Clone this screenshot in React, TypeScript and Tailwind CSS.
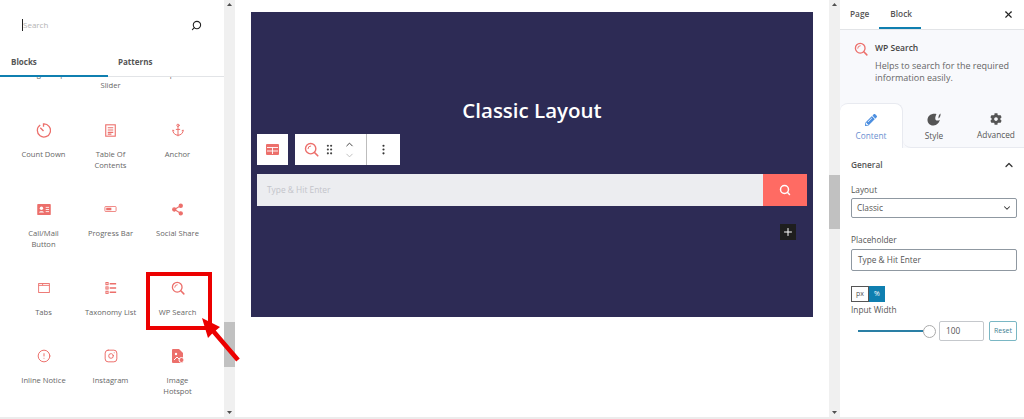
import { Anchor, ChevronDown, ChevronUp, CircleAlert, EllipsisVertical, GripVertical, Instagram, Plus, Search, Share2, X } from "lucide-react";
import type { ReactNode } from "react";
import { FaCog, FaPencilAlt } from "react-icons/fa";

const coral = "#ec6f6b";

const WpSearchIcon = ({ size = 18, color = coral }: { size?: number; color?: string }) => (
  <svg width={size} height={size} viewBox="0 0 18 18" fill="none" stroke={color} strokeWidth="1.7" strokeLinecap="round">
    <circle cx="8" cy="8" r="6.2" />
    <path d="M4.8 8a3.2 3.2 0 0 1 3.2-3.2" strokeWidth="1.2" />
    <path d="M12.6 12.6 16.5 16.5" strokeWidth="2" />
  </svg>
);

const CountDownIcon = () => (
  <svg width="15" height="15" viewBox="0 0 16 16" fill="none" stroke={coral} strokeWidth="1.4">
    <path d="M4.5 2.2A7 7 0 1 0 8 1v3" />
    <path d="M4.6 5 8 8.6" />
  </svg>
);

const TocIcon = () => (
  <svg width="11" height="13" viewBox="0 0 12 14" fill="none" stroke={coral} strokeWidth="1.2">
    <rect x="0.8" y="0.8" width="10.4" height="12.4" />
    <path d="M3 4h6M3 6.5h6M3 9h6M3 11h4" />
  </svg>
);

const ContactIcon = () => (
  <svg width="14" height="11" viewBox="0 0 16 13">
    <rect width="16" height="13" rx="1" fill={coral} />
    <circle cx="5" cy="5" r="2" fill="white" />
    <path d="M2 10c.5-2 5.500-2 6 0z" fill="white" />
    <path d="M10 4h4M10 6.500h4M10 9h4" stroke="white" />
  </svg>
);

const ProgressIcon = () => (
  <svg width="13" height="6" viewBox="0 0 14 7" fill="none" stroke={coral}>
    <rect x="0.5" y="0.5" width="13" height="6" rx="1" />
    <rect x="2" y="2" width="6" height="3" fill={coral} stroke="none" />
  </svg>
);

const TabsIcon = () => (
  <svg width="12" height="10" viewBox="0 0 13 11" fill="none" stroke={coral} strokeWidth="1">
    <rect x="0.6" y="0.6" width="11.8" height="9.800" />
    <path d="M0.600 2.600h11.800M5 .6v2" />
  </svg>
);

const TaxonomyIcon = () => (
  <svg width="12" height="12" viewBox="0 0 13 14" fill="none" stroke={coral} strokeWidth="1.2">
    <rect x="0.600" y="0.600" width="2.500" height="2.500" />
    <rect x="0.600" y="5.700" width="2.500" height="2.500" />
    <rect x="0.600" y="10.800" width="2.500" height="2.500" />
    <path d="M5 2h7.500M5 7h7.500M5 12h7.500" strokeWidth="1.800" />
  </svg>
);

const HotspotIcon = () => (
  <svg width="12" height="14" viewBox="0 0 12 14">
    <path d="M1 0h6l4 4v9a1 1 0 0 1-1 1H1a1 1 0 0 1-1-1V1a1 1 0 0 1 1-1z" fill={coral} />
    <circle cx="4" cy="5" r="1.200" fill="white" />
    <path d="m2 11 3-3 2 2" stroke="white" fill="none" />
    <circle cx="9.500" cy="11" r="2.500" fill={coral} stroke="white" />
  </svg>
);

const StyleIcon = () => (
  <svg width="14" height="13" viewBox="0 0 14 13" fill="#555">
    <path d="M13.500 0.500C13.700 3 13 4.500 11.500 5.500 11.200 3.500 12 1.500 13.500.5zM9.500 1C5.500-.2 1 2 .5 6.500.2 10 3 12.800 6.500 12.500c3.500-.3 6-3 6.200-5.800-1.200 1-3 1.300-3.900.3C7.700 5.700 8.500 3 9.500 1z" />
  </svg>
);

const TableIcon = () => (
  <svg width="13" height="11" viewBox="0 0 13 11">
    <rect width="13" height="11" rx="1" fill={coral} />
    <path d="M1 3.500h11M1 7h11M6.500 3.500V10" stroke="white" strokeWidth="0.9" />
  </svg>
);

const blocks: { label: ReactNode; icon: ReactNode }[] = [
  { label: "Count Down", icon: <CountDownIcon /> },
  { label: <>Table Of<br />Contents</>, icon: <TocIcon /> },
  { label: "Anchor", icon: <Anchor size={14} color={coral} strokeWidth={1.7} /> },
  { label: <>Call/Mail<br />Button</>, icon: <ContactIcon /> },
  { label: "Progress Bar", icon: <ProgressIcon /> },
  { label: "Social Share", icon: <Share2 size={13} color={coral} fill={coral} /> },
  { label: "Tabs", icon: <TabsIcon /> },
  { label: "Taxonomy List", icon: <TaxonomyIcon /> },
  { label: "WP Search", icon: <WpSearchIcon size={14} /> },
  { label: "Inline Notice", icon: <CircleAlert size={14} color={coral} strokeWidth={1.7} /> },
  { label: "Instagram", icon: <Instagram size={14} color={coral} strokeWidth={1.7} /> },
  { label: <>Image<br />Hotspot</>, icon: <HotspotIcon /> },
];

const Scrollbar = ({ thumb }: { thumb: string }) => (
  <div className="relative flex w-[11px] shrink-0 flex-col items-center justify-between bg-[#f0f0f0] py-[3px]">
    <svg width="5" height="3" viewBox="0 0 5 3" fill="#505050"><path d="M2.500 0 5 3H0z" /></svg>
    <div className={`absolute left-0 w-full bg-[#c1c1c1] ${thumb}`} />
    <svg width="5" height="3" viewBox="0 0 5 3" fill="#505050"><path d="M2.500 3 5 0H0z" /></svg>
  </div>
);

const Inserter = () => (
  <div className="relative z-10 flex w-[224px] shrink-0 flex-col bg-white">
    <div className="flex h-[50px] items-center justify-between pl-[22px] pr-[22px]">
      <span className="border-l border-[#222] text-[8px] leading-[12px] text-[#b4b4b4]">Search</span>
      <Search size={11} color="#222" strokeWidth={2.4} className="-scale-x-100" />
    </div>
    <div className="flex h-[27px] items-center border-b border-[#e2e4e7] pb-[2px] text-[8px] font-bold text-[#555]">
      <span className="w-[118px] pl-[11px]">Blocks</span>
      <span>Patterns</span>
      <div className="absolute left-0 top-[75px] h-[2px] w-[108px] bg-[#0f7fb0]" />
    </div>
    <div className="relative min-h-0 flex-1 overflow-hidden">
      <div className="absolute left-0 right-0 -top-[8px] grid grid-cols-[67px_67px_67px] pl-[10px] text-center text-[7.600px] leading-[11px] text-[#666]">
        <span>Google Map</span>
        <span>Countdown<br />Slider</span>
        <span>Spacer</span>
      </div>
      <div className="grid grid-cols-[67px_67px_67px] pl-[10px] pt-[43px] text-center text-[7.600px] leading-[11px] text-[#666]">
        {blocks.map((block, index) => (
          <div key={index} className="flex flex-col items-center pb-[28px]">
            <div className="flex h-[20px] items-center justify-center">{block.icon}</div>
            <div className="mt-[9px] w-[67px]">{block.label}</div>
          </div>
        ))}
      </div>
    </div>
    <div className="absolute left-[146px] top-[272px] h-[58px] w-[66px] border-[4px] border-[#ec0000]" />
    <svg className="absolute left-[198px] top-[314px]" width="44" height="50" viewBox="0 0 44 50" fill="#ec0000">
      <path d="M4 4 22 13 17.750 16.500 41.750 44.500 38.250 47.500 14.250 19.500 10 24z" />
    </svg>
  </div>
);

const Canvas = () => (
  <div className="min-w-0 flex-1 bg-white px-[16px] pt-[12px]">
    <div className="flex h-[305px] w-[562px] flex-col bg-[#2d2b55] px-[6px]">
      <h1 className="mt-[83px] text-center text-[20.500px] font-semibold leading-[30px] text-white">Classic Layout</h1>
      <div className="mt-[9px] flex h-[31px] gap-[7px]">
        <div className="flex w-[31px] items-center justify-center bg-white"><TableIcon /></div>
        <div className="flex">
          <div className="flex w-[71px] items-center bg-white pl-[9px]">
            <WpSearchIcon size={15} />
            <GripVertical size={13} color="#444" className="ml-[4px]" />
            <div className="ml-[8px] flex flex-col items-center">
              <ChevronUp size={11} color="#333" />
              <ChevronDown size={11} color="#bbb" />
            </div>
          </div>
          <div className="w-px bg-[#bdbdbd]" />
          <div className="flex w-[33px] items-center justify-center bg-white">
            <EllipsisVertical size={13} color="#333" />
          </div>
        </div>
      </div>
      <div className="mt-[9px] flex h-[32px]">
        <div className="flex flex-1 items-center bg-[#ecedf0] pl-[10px] text-[8.400px] text-[#c3c4ca]">Type &amp; Hit Enter</div>
        <div className="flex w-[44px] items-center justify-center bg-[#ff6b63]">
          <Search size={12} color="#fff" strokeWidth={3} />
        </div>
      </div>
      <div className="mt-[18px] flex justify-end pr-[11px]">
        <div className="flex h-[16px] w-[16px] items-center justify-center bg-[#1e1e1e]">
          <Plus size={12} color="#fff" strokeWidth={2} />
        </div>
      </div>
    </div>
  </div>
);

const Sidebar = () => (
  <div className="flex w-[184px] shrink-0 flex-col bg-white text-[#555]">
    <div className="flex h-[30px] items-center border-b border-[#e2e4e7] bg-white text-[8.300px] font-semibold">
      <span className="ml-[10px]">Page</span>
      <div className="relative ml-[21px] flex h-full items-center">
        <span>Block</span>
        <div className="absolute -left-[11px] bottom-0 h-[2px] w-[42px] bg-[#0f7fb0]" />
      </div>
      <X size={11} color="#222" strokeWidth={2.500} className="ml-auto mr-[10px]" />
    </div>
    <div className="flex h-[73px] gap-[7px] bg-[#f8f9fc] pl-[14px] pt-[12px]">
      <WpSearchIcon size={14} />
      <div>
        <div className="text-[8.500px] font-semibold leading-[12px] text-[#444]">WP Search</div>
        <p className="mt-[6px] w-[135px] text-[9px] leading-[12px] text-[#666]">Helps to search for the required information easily.</p>
      </div>
    </div>
    <div className="flex h-[45px] bg-[#f8f9fc] text-center text-[8.300px] leading-[12px]">
      <div className="flex w-[63px] flex-col items-center rounded-t-[8px] border-r border-t border-[#e8eaf0] bg-white pt-[10px] text-[#6b8fd0]">
        <FaPencilAlt size={12} color="#4d8fe0" />
        <span className="mt-[4px]">Content</span>
      </div>
      <div className="flex w-[62px] flex-col items-center rounded-bl-[8px] border-b border-[#e8eaf0] pt-[10px]">
        <StyleIcon />
        <span className="mt-[4px]">Style</span>
      </div>
      <div className="flex flex-1 flex-col items-center border-b border-[#e8eaf0] pl-[3px] pt-[10px]">
        <FaCog size={12} color="#555" />
        <span className="mt-[4px]">Advanced</span>
      </div>
    </div>
    <div className="flex flex-col pl-[11px] pr-[7px] text-[8.300px] leading-[12px]">
      <div className="mt-[11px] flex items-center justify-between pr-[2px] font-semibold">
        <span>General</span>
        <ChevronUp size={12} color="#333" strokeWidth={2.500} />
      </div>
      <div className="mt-[13px]">Layout</div>
      <div className="mt-[2px] flex h-[20px] items-center justify-between rounded-[2px] border border-[#8f98a1] pl-[5px] pr-[4px]">
        <span>Classic</span>
        <ChevronDown size={10} color="#333" strokeWidth={2.500} />
      </div>
      <div className="mt-[16px]">Placeholder</div>
      <div className="mt-[3px] flex h-[22px] items-center rounded-[2px] border border-[#8f98a1] pl-[6px]">Type &amp; Hit Enter</div>
      <div className="mt-[15px] flex h-[16px] w-[34px] text-[7px]">
        <div className="flex w-[18px] items-center justify-center border border-[#555]">px</div>
        <div className="flex w-[16px] items-center justify-center bg-[#0f7fb0] text-white">%</div>
      </div>
      <div className="mt-[2px]">Input Width</div>
      <div className="mt-[5px] flex items-center">
        <div className="ml-[7px] h-[2px] w-[65px] bg-[#2a7fa5]" />
        <div className="h-[13px] w-[13px] rounded-full border border-[#aaa] bg-white" />
        <div className="ml-[3px] flex h-[20px] w-[45px] items-center rounded-[2px] border border-[#c5c8cc] pl-[6px]">100</div>
        <div className="ml-[5px] flex h-[20px] w-[28px] items-center justify-center rounded-[2px] border border-[#7ab7c4] text-[7px] text-[#3d8093]">Reset</div>
      </div>
    </div>
  </div>
);

const App = () => (
  <div className="flex h-[419px] w-[1024px] flex-col overflow-hidden bg-white font-['Open_Sans',sans-serif]">
    <div className="flex min-h-0 flex-1">
      <Inserter />
      <Scrollbar thumb="top-[322px] h-[45px]" />
      <Canvas />
      <Scrollbar thumb="top-[175px] h-[54px]" />
      <Sidebar />
    </div>
    <div className="h-[2px] bg-[#ececec]" />
  </div>
);

export default App;
